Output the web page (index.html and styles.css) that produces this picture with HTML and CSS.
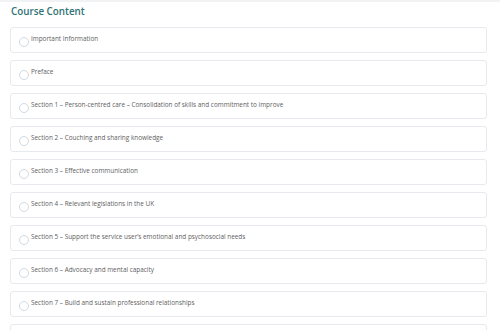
FILE: index.html
```html
<!DOCTYPE html>
<html lang="en">
<head>
  <meta charset="UTF-8">
  <meta name="viewport" content="width=device-width, initial-scale=1.0">
  <title>Course Content</title>

  <link rel="stylesheet" href="styles.css">
</head>
<body>

  <div id="content">
    <h2 class="title">Course Content</h2>
    <ul class="lessons">
      <li class="lesson"><span class="check"></span><span class="name">Important Information</span></li>
      <li class="lesson"><span class="check"></span><span class="name">Preface</span></li>
      <li class="lesson"><span class="check"></span><span class="name">Section 1 – Person-centred care – Consolidation of skills and commitment to improve</span></li>
      <li class="lesson"><span class="check"></span><span class="name">Section 2 – Couching and sharing knowledge</span></li>
      <li class="lesson"><span class="check"></span><span class="name">Section 3 – Effective communication</span></li>
      <li class="lesson"><span class="check"></span><span class="name">Section 4 – Relevant legislations in the UK</span></li>
      <li class="lesson"><span class="check"></span><span class="name">Section 5 – Support the service user’s emotional and psychosocial needs</span></li>
      <li class="lesson"><span class="check"></span><span class="name">Section 6 – Advocacy and mental capacity</span></li>
      <li class="lesson"><span class="check"></span><span class="name">Section 7 – Build and sustain professional relationships</span></li>
      <li class="lesson"></li>
    </ul>
  </div>

</body>
</html>
```

FILE: styles.css
```css
* {
    margin: 0;
    padding: 0;
}

body {
    background: #fff;
    font-family: "Open Sans", "Noto Sans", sans-serif;
    overflow: hidden;
}

li {
    list-style: none;
}

#content {
    border-top: 2px solid #f1f2f4;
    padding: 0 13px 0 10px;
}

.title {
    font-size: 9.8px;
    font-weight: 600;
    color: #2f7276;
    line-height: 12px;
    padding: 4px 0 9px 1px;
}

.lesson {
    display: flex;
    align-items: flex-start;
    height: 26px;
    margin-bottom: 7px;
    border: 1px solid #e6e9ee;
    border-radius: 3px;
    box-sizing: border-box;
    padding: 6px 8px 0;
}

.check {
    width: 8px;
    height: 8px;
    border: 1px solid #d3d9e1;
    border-radius: 50%;
    margin-top: 2.5px;
    margin-right: 2px;
    flex-shrink: 0;
}

.name {
    font-size: 6.4px;
    font-weight: 500;
    line-height: 10px;
    color: #5e5e5e;
    white-space: nowrap;
}
```
